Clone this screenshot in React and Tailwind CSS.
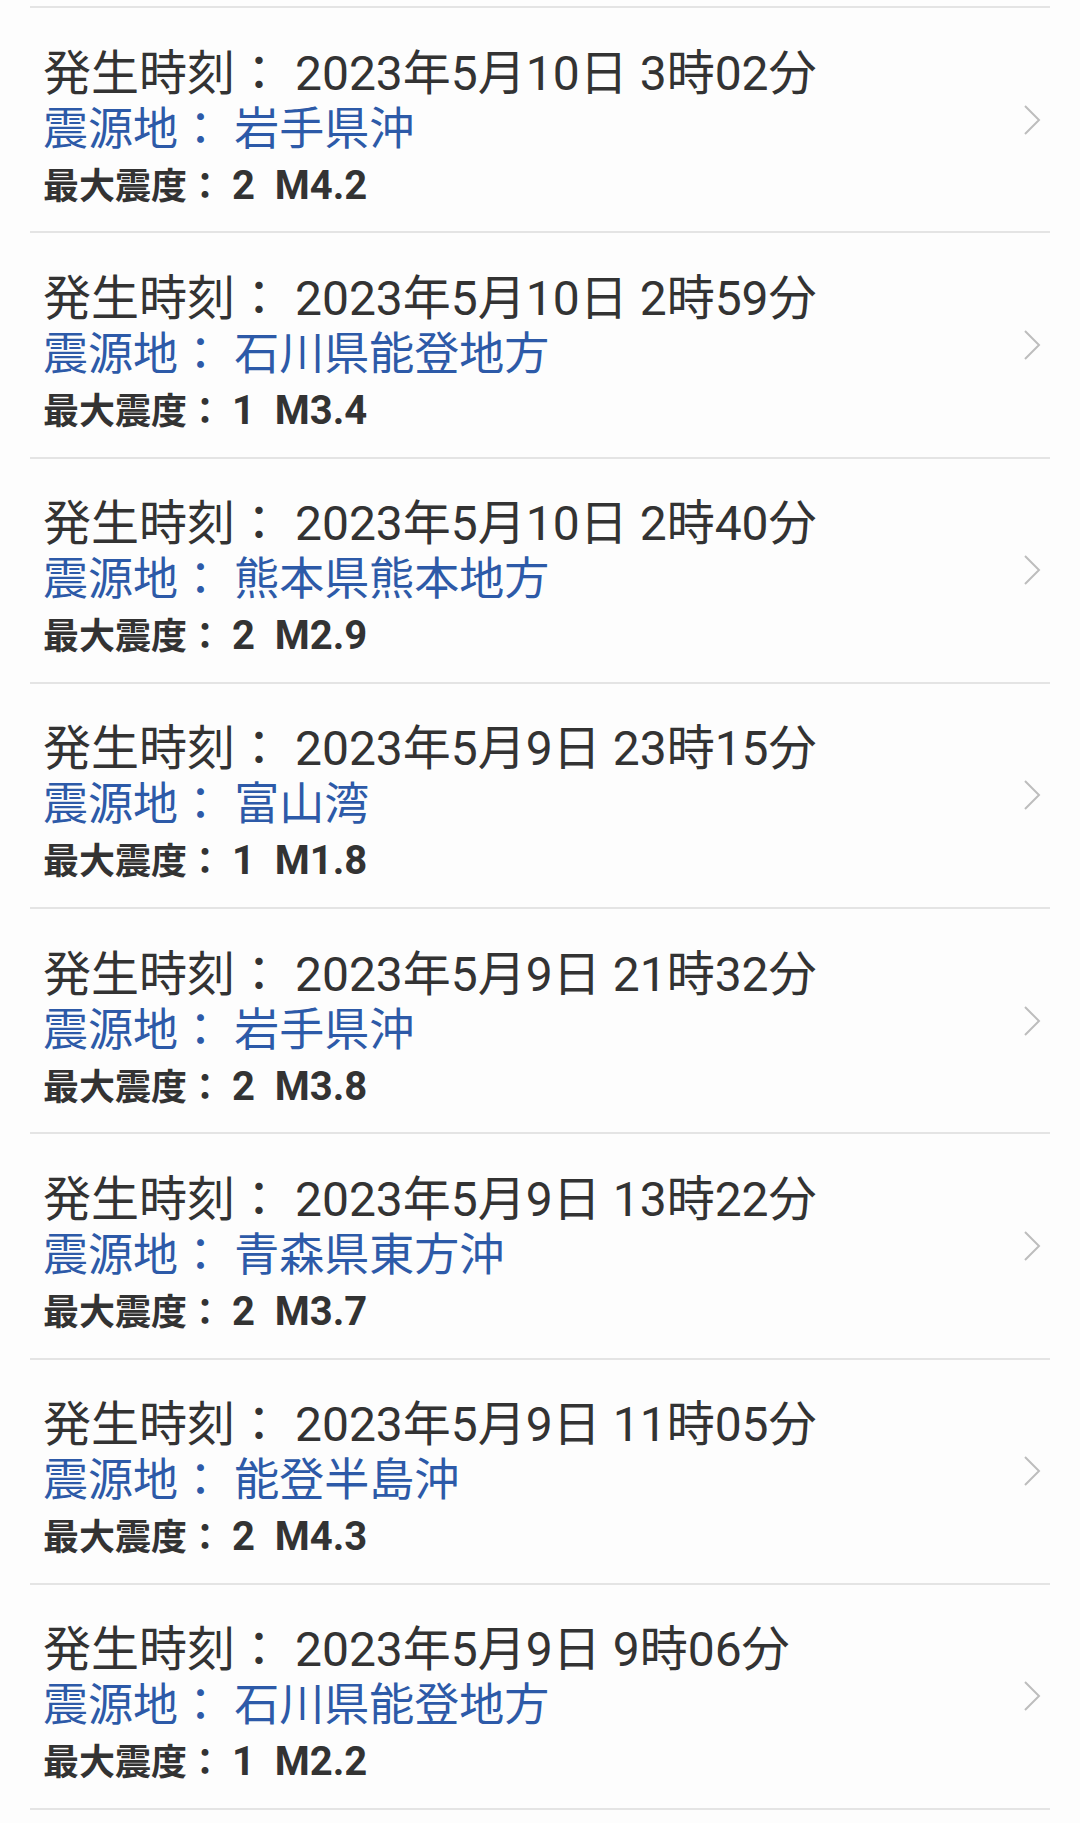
const quakes = [
  { time: '2023年5月10日 3時02分', place: '岩手県沖', shindo: '2', mag: 'M4.2' },
  { time: '2023年5月10日 2時59分', place: '石川県能登地方', shindo: '1', mag: 'M3.4' },
  { time: '2023年5月10日 2時40分', place: '熊本県熊本地方', shindo: '2', mag: 'M2.9' },
  { time: '2023年5月9日 23時15分', place: '富山湾', shindo: '1', mag: 'M1.8' },
  { time: '2023年5月9日 21時32分', place: '岩手県沖', shindo: '2', mag: 'M3.8' },
  { time: '2023年5月9日 13時22分', place: '青森県東方沖', shindo: '2', mag: 'M3.7' },
  { time: '2023年5月9日 11時05分', place: '能登半島沖', shindo: '2', mag: 'M4.3' },
  { time: '2023年5月9日 9時06分', place: '石川県能登地方', shindo: '1', mag: 'M2.2' },
];

const font = { fontFamily: 'Roboto, "Noto Sans CJK JP", sans-serif' };

const Chevron = () => (
  <svg width="18" height="32" viewBox="0 0 18 32" className="mr-[9px] shrink-0">
    <polyline points="2,2 16,16 2,30" fill="none" stroke="#bdbdbd" strokeWidth="2" />
  </svg>
);

const App = () => {
  return (
    <div className="w-[1080px] min-h-[1823px] bg-[#fdfdfd] pt-[6px]" style={font}>
      <ul className="mx-[30px] border-t-2 border-[#e4e4e4]">
        {quakes.map((q, i) => (
          <li key={i} className="h-[225.25px] border-b-2 border-[#e4e4e4] flex items-center">
            <div className="flex-1 pl-[13px] pt-[21px]">
              <div className="text-[48px] leading-[56px] text-[#333333] whitespace-nowrap">
                発生時刻： {q.time}
              </div>
              <div className="text-[45px] leading-[56px] text-[#2d5aa8] whitespace-nowrap">
                震源地： {q.place}
              </div>
              <div className="text-[36px] leading-[56px] font-bold text-[#333333] whitespace-nowrap">
                最大震度： <span className="text-[40px]">{q.shindo}&nbsp; {q.mag}</span>
              </div>
            </div>
            <Chevron />
          </li>
        ))}
      </ul>
    </div>
  );
};

export default App;
